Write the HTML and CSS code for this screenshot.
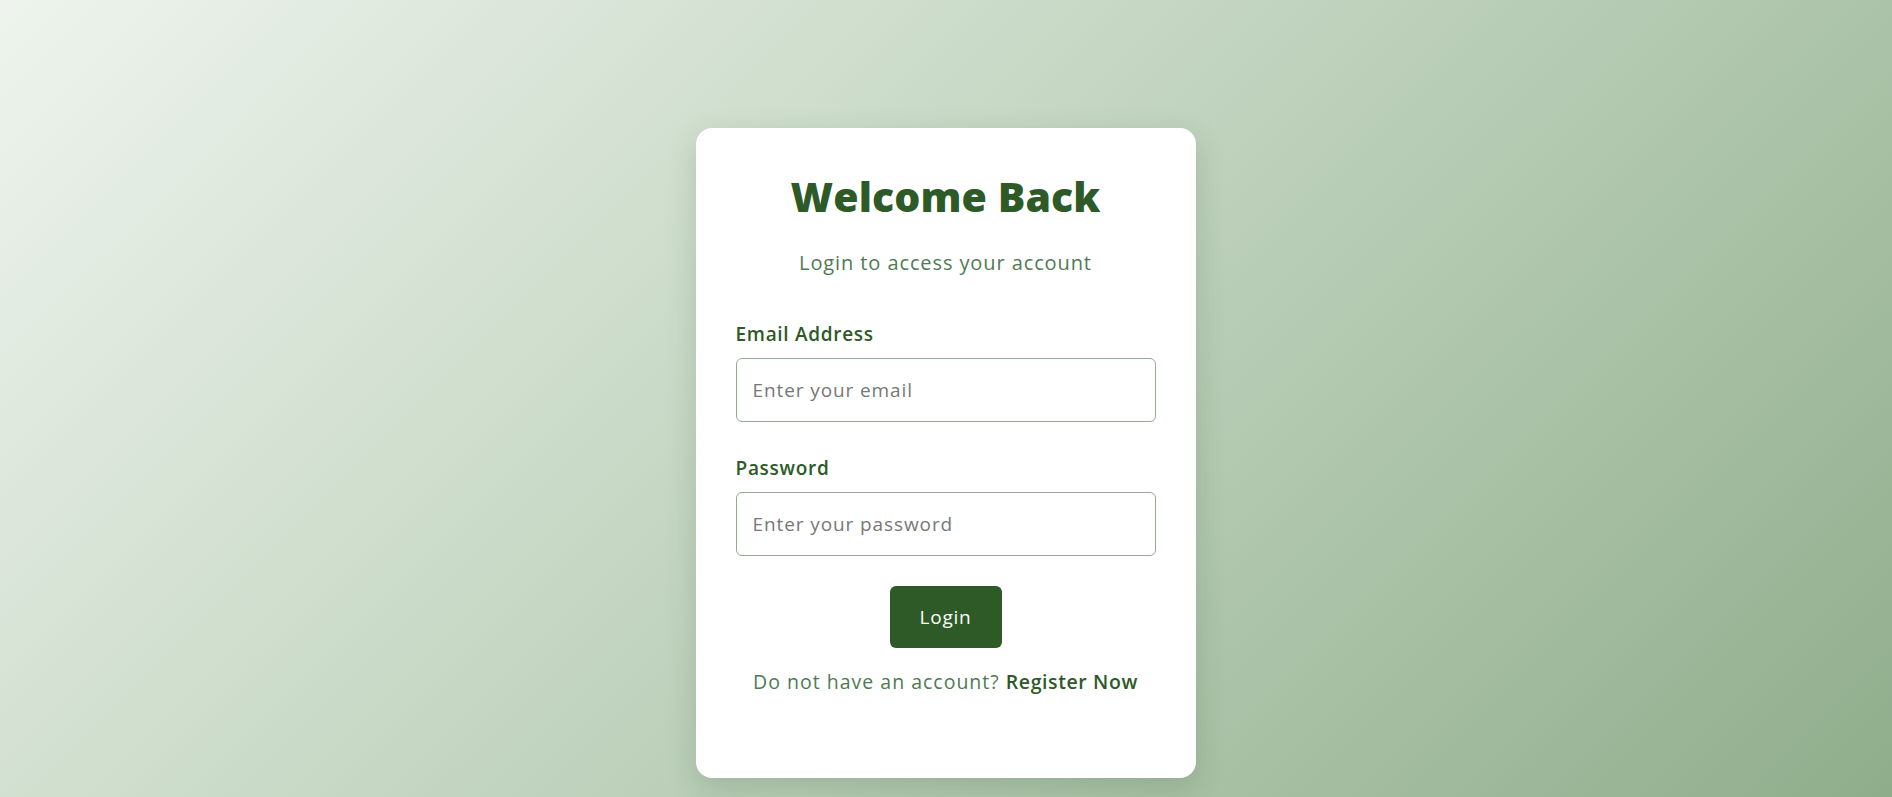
FILE: index.html
```html
<!DOCTYPE html>
<html lang="en">
<head>
<meta charset="utf-8">
<title>Login</title>
<link rel="stylesheet" href="styles.css">
</head>
<body>
<main class="page">
  <form class="card">
    <h1 class="title">Welcome Back</h1>
    <p class="subtitle">Login to access your account</p>
    <div class="field">
      <label class="label" for="email">Email Address</label>
      <input class="input" id="email" type="email" placeholder="Enter your email">
    </div>
    <div class="field">
      <label class="label" for="password">Password</label>
      <input class="input" id="password" type="password" placeholder="Enter your password">
    </div>
    <div class="actions">
      <button class="btn" type="button">Login</button>
    </div>
    <p class="register">Do not have an account? <a class="register-link" href="#">Register Now</a></p>
  </form>
</main>
</body>
</html>
```

FILE: styles.css
```css
* { box-sizing: border-box; }
html, body { margin: 0; height: 100%; }
body {
  font-family: "Open Sans", "Liberation Sans", sans-serif;
  background: linear-gradient(135deg, #eef4ed 0%, #c4d6c2 45%, #8fad8b 100%);
  overflow: hidden;
}
.page {
  height: 797px;
  display: flex;
  justify-content: center;
  padding-top: 128px;
  padding-right: 1px;
}
.card {
  width: 500px;
  height: 650px;
  background: #fff;
  border-radius: 16px;
  box-shadow: 0 10px 30px rgba(40, 70, 40, 0.18);
  padding: 43px 40px 40px;
  display: flex;
  flex-direction: column;
}
.title {
  margin: 0;
  text-align: center;
  font-size: 41px;
  line-height: 50px;
  font-weight: 800;
  letter-spacing: 0.1px;
  color: #2d5a27;
}
.subtitle {
  margin: 27px 0 0;
  text-align: center;
  font-size: 20px;
  line-height: 30px;
  letter-spacing: 0.9px;
  color: #4f7a53;
}
.field { display: flex; flex-direction: column; margin-top: 42px; }
.field + .field { margin-top: 32px; }
.label {
  font-size: 19px;
  line-height: 28px;
  font-weight: 600;
  letter-spacing: 0.7px;
  color: #2d5a27;
  margin-bottom: 10px;
}
.input {
  height: 64px;
  border: 1px solid #93ab91;
  border-radius: 6px;
  padding: 0 16px;
  font-family: inherit;
  font-size: 19px;
  letter-spacing: 0.9px;
  color: #333;
}
.input::placeholder { color: #777; }
.actions { display: flex; justify-content: center; margin-top: 30px; }
.btn {
  width: 112px;
  height: 62px;
  border: 0;
  border-radius: 6px;
  background: #2d5a27;
  color: #fff;
  font-family: inherit;
  font-size: 19px;
  font-weight: 500;
  letter-spacing: 0.8px;
}
.register {
  margin: 20px 0 0;
  text-align: center;
  font-size: 19.5px;
  line-height: 28px;
  letter-spacing: 1px;
  color: #4f7a53;
}
.register-link {
  color: #2d5a27;
  font-weight: 600;
  letter-spacing: 0.6px;
  text-decoration: none;
}
```
